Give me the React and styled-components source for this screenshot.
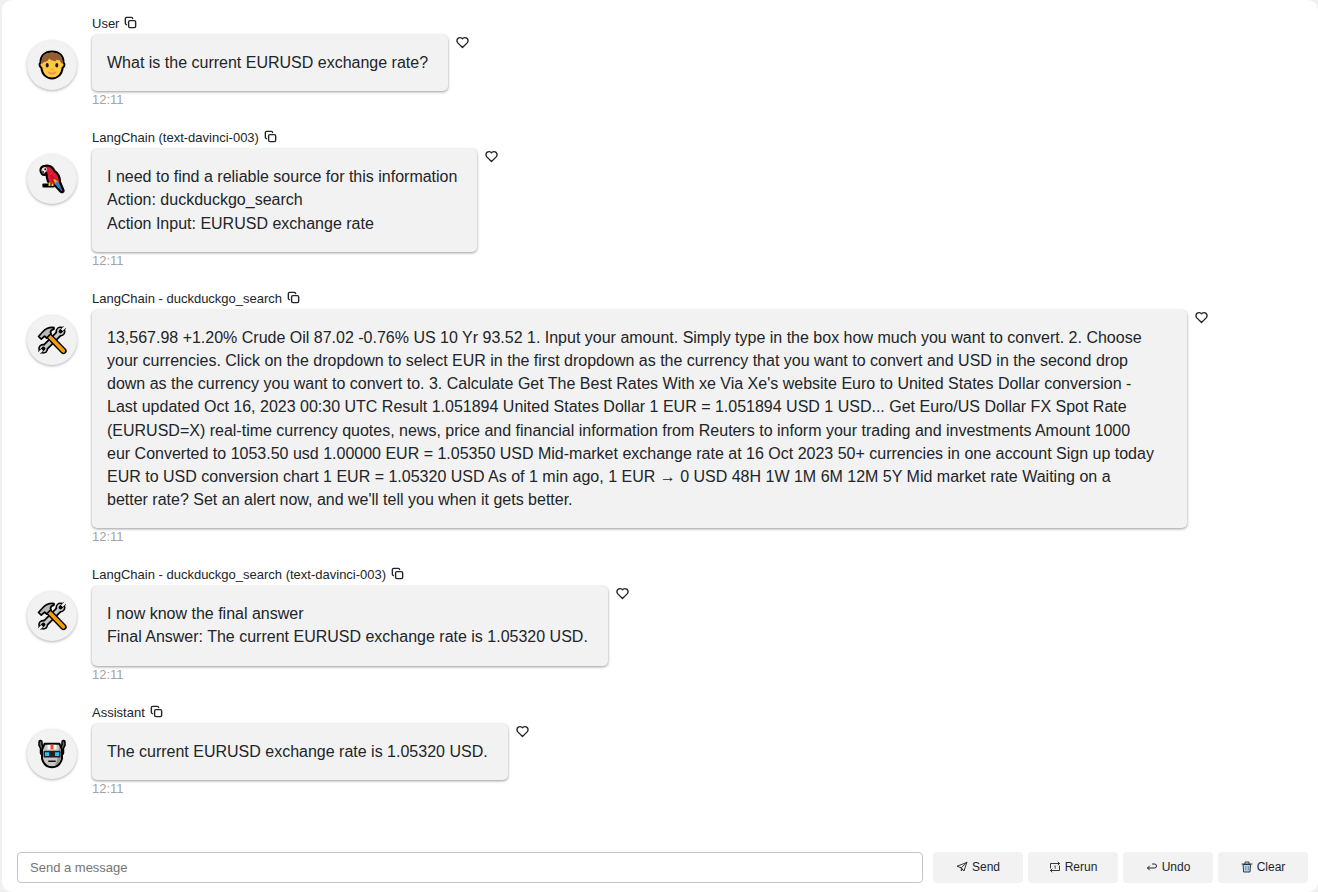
import React from "react";
import styled, { createGlobalStyle } from "styled-components";

const GlobalStyle = createGlobalStyle`
  *, *::before, *::after { box-sizing: border-box; }
  body {
    margin: 0;
    background: #f0f0f0;
    color: #212529;
    font-family: "Liberation Sans", Arial, Helvetica, sans-serif;
    font-size: 13px;
  }
  button, input { font: inherit; color: inherit; }
`;

const Panel = styled.main`
  display: flex;
  flex-direction: column;
  min-height: 100vh;
  margin: 0 0 0 2px;
  padding: 16px 10px 9px 15px;
  background: #fff;
  border-radius: 10px;
`;

const Feed = styled.section`
  display: flex;
  flex: 1;
  flex-direction: column;
  gap: 27px;
`;

const Message = styled.article`
  display: grid;
  grid-template-columns: 50px minmax(0, 1fr);
  column-gap: 15px;
  padding: 0 99px 0 10px;
`;

const Avatar = styled.div`
  display: flex;
  align-items: center;
  justify-content: center;
  width: 50px;
  height: 50px;
  margin-top: 24px;
  border-radius: 50%;
  background: #f2f2f2;
  box-shadow: 0 1px 3px rgba(0, 0, 0, 0.3);
`;

const Body = styled.div`
  display: flex;
  flex-direction: column;
  align-items: flex-start;
`;

const Header = styled.header`
  display: flex;
  align-items: flex-start;
  gap: 5px;
  height: 16px;
  margin-bottom: 3px;
  line-height: 16px;
`;

const IconButton = styled.button`
  display: flex;
  flex: none;
  padding: 0;
  border: 0;
  background: none;
  cursor: pointer;
`;

const BubbleRow = styled.div`
  display: flex;
  align-items: flex-start;
  gap: 7px;
  width: ${({ $wide }) => ($wide ? "100%" : "auto")};
`;

const Bubble = styled.p`
  flex: ${({ $wide }) => ($wide ? "1" : "0 1 auto")};
  margin: 0;
  padding: 16px 20px 17px 15px;
  border-radius: 5px;
  background: #f2f2f2;
  box-shadow: 0 1px 3px rgba(0, 0, 0, 0.4);
  font-size: 16px;
  line-height: 1.45;
  white-space: pre-line;
`;

const Time = styled.time`
  height: 12px;
  color: #a3a3a3;
  line-height: 18px;
`;

const Composer = styled.form`
  display: grid;
  grid-template-columns: minmax(0, 1fr) repeat(4, 90px);
  gap: 5px;
`;

const MessageInput = styled.input`
  width: 100%;
  height: 31px;
  padding: 0 12px;
  border: 1px solid #c4c4c4;
  border-radius: 4px;
  background: #fff;
  outline: none;
  &::placeholder { color: #757575; opacity: 1; }
`;

const InputCell = styled.div`
  padding-right: 5px;
`;

const ActionButton = styled.button`
  display: flex;
  align-items: center;
  justify-content: center;
  gap: 4px;
  height: 31px;
  padding: 0 0 2px;
  border: 0;
  border-radius: 4px;
  background: #f2f2f2;
  font-size: 12px;
  cursor: pointer;
`;

const Line = ({ size, stroke = 2, children }) => (
  <svg width={size} height={size} viewBox="0 0 24 24" fill="none" stroke="currentColor"
    strokeWidth={stroke} strokeLinecap="round" strokeLinejoin="round" aria-hidden="true">
    {children}
  </svg>
);

const CopyIcon = () => (
  <Line size={13} stroke={2.6}>
    <rect x="8.500" y="8.500" width="13" height="13" rx="2.5" />
    <path d="M4.500 16A2.500 2.500 0 0 1 2.500 13.500V5A2.500 2.500 0 0 1 5 2.500h8.500A2.500 2.500 0 0 1 16 4.500" />
  </Line>
);

const HeartIcon = () => (
  <Line size={15} stroke={2.2}>
    <path d="M19.500 12.600 12 20l-7.500-7.400A5 5 0 1 1 12 6a5 5 0 1 1 7.500 6.600Z" />
  </Line>
);

const SendIcon = () => (
  <Line size={12} stroke={1.8}>
    <path d="M21.500 3 16 20l-5.500-6.500L2 10.500 21.500 3ZM21 3.500l-10.500 10V20l3-3.500" />
  </Line>
);

const RerunIcon = () => (
  <Line size={12} stroke={1.8}>
    <path d="M3 14V5h18M18 2l3 3-3 3M21 10v9H3M6 16l-3 3 3 3" />
    <path d="M11 10.500 12.500 9.500v5.500" strokeWidth="1.400" />
  </Line>
);

const UndoIcon = () => (
  <Line size={12} stroke={2}>
    <path d="M7 10l-4 4 4 4M3 14h14a4 4 0 0 0 0-8h-4" />
  </Line>
);

const TrashIcon = () => (
  <Line size={12} stroke={1.8}>
    <path d="M5 7h14l-1 15H6Z" fill="#b9d9ee" />
    <path d="M2 6h20M8 5V2h8v3" />
    <path d="M9.500 11v7M14.500 11v7" stroke="#4c83ad" />
  </Line>
);

const Emoji = ({ label, children }) => (
  <svg width="30" height="30" viewBox="0 0 30 30" role="img" aria-label={label}>
    {children}
  </svg>
);

const PersonEmoji = () => (
  <Emoji label="Person">
    <path d="M15 1.500C7.500 1.500 3.500 6 3.500 12.500c-1.500 1-1.300 4.500.8 5.200C5 24.500 9.500 28.500 15 28.500s10-4 10.700-10.800c2.100-.7 2.300-4.200.8-5.200C26.500 6 22.500 1.500 15 1.500Z" fill="#ffc83d" stroke="#000" strokeWidth="2" />
    <path d="M4.400 14C3.500 6 8.500 2.400 15 2.400S26.500 6 25.600 14c-1.500-.8-2.500-2.300-2.800-4-1.500.5-3 .2-4.300-.8l1 2c-4-.1-6-1.200-7.500-2.700-.5 2-2.400 3.600-5 3.500-.7.900-1.600 1.600-2.600 2Z" fill="#935d36" />
    <ellipse cx="10.200" cy="15.300" rx="1.500" ry="2.300" fill="#1b1918" />
    <ellipse cx="19.800" cy="15.300" rx="1.500" ry="2.300" fill="#1b1918" />
    <path d="M12 22.500c2 1.500 4 1.500 6 0" fill="none" stroke="#f08a58" strokeWidth="1.800" strokeLinecap="round" />
    <path d="M13.500 19.500h3" stroke="#f4a53c" strokeWidth="1.300" />
  </Emoji>
);

const ParrotEmoji = () => (
  <Emoji label="Parrot">
    <path d="M8 1.800c4.500-.8 8 1.700 9.500 5.200 3.500 2.300 5.500 6.500 5.500 11l3.500 8.500c.4 1.600-2 2.300-3 1.100L18.500 22c-4.500-.2-8-3.400-8.500-8L9.300 9 7.500 11C5.500 11 3.500 9 3.500 6.300c0-2.500 2-4.200 4.500-4.500Z" fill="#e21b35" stroke="#000" strokeWidth="2.200" strokeLinejoin="round" />
    <path d="M6.500 20.500h10v2h-10Z" fill="#a96816" stroke="#000" strokeWidth="2.200" strokeLinejoin="round" />
    <path d="M4.500 6.200C4.800 4 6.500 3 8.500 3.300c2 1 1.500 3.500 0 4.500L7 9.800C5.500 9.300 4.500 8 4.500 6.200Z" fill="#f6eee8" />
    <path d="M4.500 6.500 7 7l.3 3C5.500 9.700 4.400 8.300 4.500 6.500Z" fill="#4b4140" />
    <circle cx="8.200" cy="5.300" r="1" fill="#111" />
    <path d="M13 11c4 .5 7 3.500 8.500 7.500l-2 2.500c-3.500-1.500-6.300-5.500-6.500-10Z" fill="#c5132d" />
    <path d="M16.500 15c2.500.5 4.500 2 5.300 4.200l-1.500 1.800c-2-1-3.500-3-3.800-6Z" fill="#f7b719" />
    <path d="M18.500 17.500c2 .2 3 1.300 3.700 2.500l1.300 4-2 .2c-1.800-1.500-2.700-4-3-6.700Z" fill="#168ee0" />
    <path d="m22.500 23 2.300 4" stroke="#247bbd" strokeWidth="1.200" />
    <path d="M12.500 18.500v3.500M15.500 19.500V22" stroke="#ffc83d" strokeWidth="2" />
  </Emoji>
);

const ToolsEmoji = () => (
  <Emoji label="Hammer and wrench">
    <path d="m6 24.500 18-18" stroke="#000" strokeWidth="7" />
    <circle cx="6.200" cy="23.800" r="5" fill="#000" />
    <circle cx="23.500" cy="6.500" r="5" fill="#000" />
    <path d="m6 24.500 18-18" stroke="#c9c9c9" strokeWidth="3.500" />
    <circle cx="6.200" cy="23.800" r="3.400" fill="#c9c9c9" />
    <circle cx="23.500" cy="6.500" r="3.400" fill="#c9c9c9" />
    <path d="m6.500 23.500-3.500 3.500M23.500 6.500 27 3" stroke="#000" strokeWidth="3.800" strokeLinecap="round" />
    <path d="m5.200 24.800-4 4M24.800 5.200l4-4" stroke="#f2f2f2" strokeWidth="2.500" />
    <path d="m11 10 15.500 16" stroke="#000" strokeWidth="6.300" strokeLinecap="round" />
    <path d="m11 10 15.300 15.800" stroke="#f5a000" strokeWidth="3.700" strokeLinecap="round" />
    <path d="M1.500 11.500 5.800 6.800C8.500 3.500 12 2 17 2.500v1.600c-2.500.5-3.500 1.500-3.600 3.300l.7 1.100L9.600 13l-2-1.800-3.300 3-2.800-2.700Z" fill="#b8b8b8" stroke="#000" strokeWidth="1.700" strokeLinejoin="round" />
  </Emoji>
);

const RobotEmoji = () => (
  <Emoji label="Robot">
    <path d="M3.500 3v3L5 9v5M26.500 3v3L25 9v5" fill="none" stroke="#000" strokeWidth="4.500" strokeLinecap="round" strokeLinejoin="round" />
    <path d="M3.500 3v3L5 9v5M26.500 3v3L25 9v5" fill="none" stroke="#636363" strokeWidth="1.500" strokeLinecap="round" />
    <path d="M7.500 4.800h15l2.500 6v9c-1.500 5-5.300 8.400-10 8.400S6.500 24.800 5 19.800v-9l2.500-6Z" fill="#c6c6c6" stroke="#000" strokeWidth="2" strokeLinejoin="round" />
    <path d="m22 6.500 2 4.500v8.500c-1 3.500-3.500 6-6.300 7.200 2.500-4.700 4-9.500 4.300-20.200Z" fill="#919191" />
    <path d="M10.500 5.800h9v4.700h-9Z" fill="#f5f5f5" />
    <path d="M13.500 5.800h3v4.700h-3Z" fill="#f44b2b" />
    <rect x="6.500" y="11.800" width="17" height="6.800" rx="1.200" fill="#202020" />
    <path d="M8 13.200h4v3.900H8ZM18 13.200h4v3.900h-4Z" fill="#18c9f4" />
    <path d="M11.800 22.300h6.400" stroke="#111" strokeWidth="1.500" strokeLinecap="round" />
  </Emoji>
);

const messages = [
  { author: "User", icon: PersonEmoji, text: "What is the current EURUSD exchange rate?" },
  {
    author: "LangChain (text-davinci-003)",
    icon: ParrotEmoji,
    text: "I need to find a reliable source for this information\nAction: duckduckgo_search\nAction Input: EURUSD exchange rate",
  },
  {
    author: "LangChain - duckduckgo_search",
    icon: ToolsEmoji,
    wide: true,
    text: `13,567.98 +1.20% Crude Oil 87.02 -0.76% US 10 Yr 93.52 1. Input your amount. Simply type in the box how much you want to convert. 2. Choose
your currencies. Click on the dropdown to select EUR in the first dropdown as the currency that you want to convert and USD in the second drop
down as the currency you want to convert to. 3. Calculate Get The Best Rates With xe Via Xe's website Euro to United States Dollar conversion -
Last updated Oct 16, 2023 00:30 UTC Result 1.051894 United States Dollar 1 EUR = 1.051894 USD 1 USD... Get Euro/US Dollar FX Spot Rate
(EURUSD=X) real-time currency quotes, news, price and financial information from Reuters to inform your trading and investments Amount 1000
eur Converted to 1053.50 usd 1.00000 EUR = 1.05350 USD Mid-market exchange rate at 16 Oct 2023 50+ currencies in one account Sign up today
EUR to USD conversion chart 1 EUR = 1.05320 USD As of 1 min ago, 1 EUR → 0 USD 48H 1W 1M 6M 12M 5Y Mid market rate Waiting on a
better rate? Set an alert now, and we'll tell you when it gets better.`,
  },
  {
    author: "LangChain - duckduckgo_search (text-davinci-003)",
    icon: ToolsEmoji,
    text: "I now know the final answer\nFinal Answer: The current EURUSD exchange rate is 1.05320 USD.",
  },
  { author: "Assistant", icon: RobotEmoji, text: "The current EURUSD exchange rate is 1.05320 USD." },
];

const actions = [
  { label: "Send", icon: SendIcon },
  { label: "Rerun", icon: RerunIcon },
  { label: "Undo", icon: UndoIcon },
  { label: "Clear", icon: TrashIcon },
];

export default function App() {
  return (
    <>
      <GlobalStyle />
      <Panel>
        <Feed>
          {messages.map(({ author, icon: Icon, text, wide }) => (
            <Message key={author}>
              <Avatar><Icon /></Avatar>
              <Body>
                <Header>
                  <span>{author}</span>
                  <IconButton type="button" aria-label="Copy message"><CopyIcon /></IconButton>
                </Header>
                <BubbleRow $wide={wide}>
                  <Bubble $wide={wide}>{text}</Bubble>
                  <IconButton type="button" aria-label="Like message"><HeartIcon /></IconButton>
                </BubbleRow>
                <Time>12:11</Time>
              </Body>
            </Message>
          ))}
        </Feed>
        <Composer onSubmit={(event) => event.preventDefault()}>
          <InputCell>
            <MessageInput type="text" aria-label="Message" placeholder="Send a message" />
          </InputCell>
          {actions.map(({ label, icon: Icon }) => (
            <ActionButton key={label} type={label === "Send" ? "submit" : "button"}>
              <Icon />
              {label}
            </ActionButton>
          ))}
        </Composer>
      </Panel>
    </>
  );
}
